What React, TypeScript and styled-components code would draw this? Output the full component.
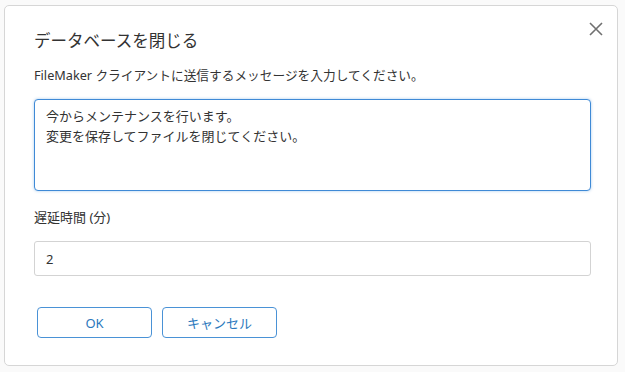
import styled, { createGlobalStyle } from 'styled-components';

const GlobalStyle = createGlobalStyle`
  body {
    margin: 0;
    background: #fafafa;
    font-family: "Noto Sans", "Noto Sans CJK JP", sans-serif;
  }
`;

const Dialog = styled.div`
  position: relative;
  box-sizing: border-box;
  width: 614px;
  height: 361px;
  margin: 5px 0 0 4px;
  padding: 23px 29px 0;
  background: #ffffff;
  border: 1px solid #d6d6d6;
  border-radius: 5px;
  color: #333333;
`;

const CloseButton = styled.button.attrs({ type: 'button' })`
  position: absolute;
  top: 11px;
  right: 9px;
  width: 24px;
  height: 24px;
  padding: 0;
  border: none;
  background: transparent;
  display: flex;
  align-items: center;
  justify-content: center;
  cursor: pointer;
`;

const Title = styled.h2`
  margin: 0;
  font-size: 16.5px;
  line-height: 24px;
  font-weight: 400;
  color: #333333;
`;

const Description = styled.p`
  margin: 12px 0 0;
  font-size: 12.7px;
  line-height: 20px;
`;

const MessageBox = styled.textarea`
  display: block;
  box-sizing: border-box;
  width: 557px;
  height: 92px;
  margin-top: 14px;
  padding: 6px 11px;
  border: 1.5px solid #3f8ad6;
  border-radius: 4px;
  box-shadow: 0 0 3px rgba(63, 138, 214, 0.45);
  font-family: "Noto Sans CJK JP", sans-serif;
  font-size: 13px;
  line-height: 20px;
  color: #333333;
  resize: none;
  outline: none;
`;

const FieldLabel = styled.div`
  margin-top: 16px;
  font-size: 13px;
  line-height: 20px;
`;

const DelayInput = styled.input.attrs({ type: 'text' })`
  display: block;
  box-sizing: border-box;
  width: 557px;
  height: 35px;
  margin-top: 14px;
  padding: 0 11px;
  border: 1px solid #d3d3d3;
  border-radius: 3px;
  font-family: "Noto Sans", sans-serif;
  font-size: 13px;
  color: #333333;
  outline: none;
`;

const ButtonRow = styled.div`
  display: flex;
  gap: 10px;
  margin: 31px 0 0 3px;
`;

const ActionButton = styled.button.attrs({ type: 'button' })`
  width: 115px;
  height: 31px;
  padding: 0;
  background: #ffffff;
  border: 1px solid #4a92d6;
  border-radius: 4px;
  color: #2b78bd;
  font-family: "Noto Sans", "Noto Sans CJK JP", sans-serif;
  font-size: 13px;
  cursor: pointer;
`;

function App() {
  return (
    <>
      <GlobalStyle />
      <Dialog>
        <CloseButton aria-label="閉じる">
          <svg width="14" height="14" viewBox="0 0 14 14">
            <path d="M1 1 L13 13 M13 1 L1 13" stroke="#707070" strokeWidth="1.6" />
          </svg>
        </CloseButton>
        <Title>データベースを閉じる</Title>
        <Description>FileMaker クライアントに送信するメッセージを入力してください。</Description>
        <MessageBox
          defaultValue={'今からメンテナンスを行います。\n変更を保存してファイルを閉じてください。'}
        />
        <FieldLabel>遅延時間 (分)</FieldLabel>
        <DelayInput defaultValue="2" />
        <ButtonRow>
          <ActionButton>OK</ActionButton>
          <ActionButton>キャンセル</ActionButton>
        </ButtonRow>
      </Dialog>
    </>
  );
}

export default App;
